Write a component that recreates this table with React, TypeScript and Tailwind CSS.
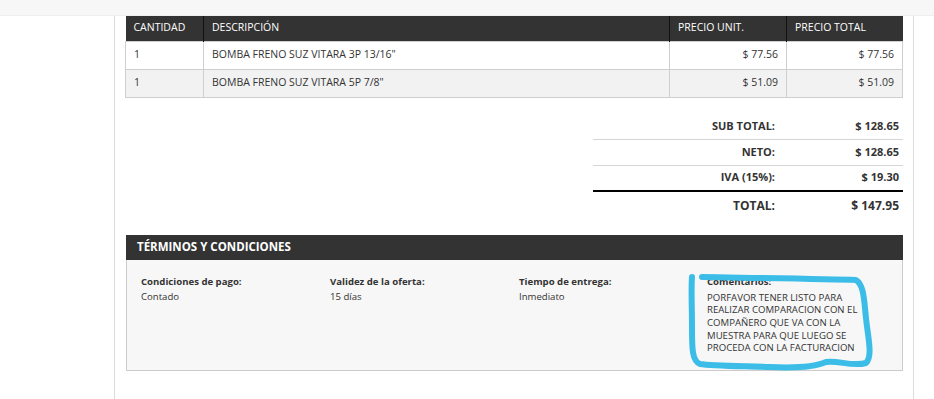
import React from "react";

type Item = { qty: number; desc: string; unit: string; total: string };

const items: Item[] = [
  { qty: 1, desc: "BOMBA FRENO SUZ VITARA 3P 13/16\"", unit: "$ 77.56", total: "$ 77.56" },
  { qty: 1, desc: "BOMBA FRENO SUZ VITARA 5P 7/8\"", unit: "$ 51.09", total: "$ 51.09" },
];

const totals = [
  { label: "SUB TOTAL:", value: "$ 128.65" },
  { label: "NETO:", value: "$ 128.65" },
  { label: "IVA (15%):", value: "$ 19.30" },
];

const terms = [
  { label: "Condiciones de pago:", value: "Contado" },
  { label: "Validez de la oferta:", value: "15 días" },
  { label: "Tiempo de entrega:", value: "Inmediato" },
];

const App = () => {
  return (
    <div className="relative min-h-screen bg-white font-['Open_Sans',sans-serif] text-[#333]">
      <div className="h-4 bg-[#f7f7f7] border-b border-[#efefef]" />
      <div className="ml-[114px] w-[800px] h-[383px] border-x border-[#dcdcdc] px-[10px]">
        {/* items */}
        <table className="w-full border-collapse text-[10.5px]">
          <thead>
            <tr className="bg-[#333] text-white text-left h-[25px]">
              <th className="w-[78px] px-2 font-normal border-r border-[#111]">CANTIDAD</th>
              <th className="px-2 font-normal border-r border-[#111]">DESCRIPCIÓN</th>
              <th className="w-[117px] px-2 font-normal border-r border-[#111]">PRECIO UNIT.</th>
              <th className="w-[116px] px-2 font-normal">PRECIO TOTAL</th>
            </tr>
          </thead>
          <tbody>
            {items.map((it, i) => (
              <tr key={i} className={`h-[28px] ${i % 2 ? "bg-[#f2f2f2]" : "bg-white"}`}>
                <td className="px-2 border border-[#cfcfcf]">{it.qty}</td>
                <td className="px-2 border border-[#cfcfcf]">{it.desc}</td>
                <td className="px-2 border border-[#cfcfcf] text-right">{it.unit}</td>
                <td className="px-2 border border-[#cfcfcf] text-right">{it.total}</td>
              </tr>
            ))}
          </tbody>
        </table>

        {/* totals */}
        <div className="flex justify-end mt-[16px]">
          <div className="w-[310px] text-[11px] font-bold">
            {totals.map((t, i) => (
              <div
                key={t.label}
                className={`flex h-[26px] items-center ${i === 2 ? "border-b-2 border-black" : "border-b border-[#d5d5d5]"}`}
              >
                <span className="w-[182px] text-right">{t.label}</span>
                <span className="flex-1 text-right pr-[4px]">{t.value}</span>
              </div>
            ))}
            <div className="flex h-[28px] items-center text-[12px]">
              <span className="w-[182px] text-right">TOTAL:</span>
              <span className="flex-1 text-right pr-[4px]">$ 147.95</span>
            </div>
          </div>
        </div>

        {/* terms */}
        <div className="mt-[15px] ml-px">
          <div className="bg-[#333] h-[25px] flex items-center px-[11px] text-white text-[11.5px] font-bold">
            TÉRMINOS Y CONDICIONES
          </div>
          <div className="h-[111px] bg-[#f7f7f7] border-x border-b border-[#cccccc] pl-[14px] pt-[15px] grid grid-cols-[189px_189px_188px_1fr] text-[9.6px]">
            {terms.map((t) => (
              <div key={t.label}>
                <div className="font-bold leading-[14px]">{t.label}</div>
                <div className="leading-[16px]">{t.value}</div>
              </div>
            ))}
            <div>
              <div className="font-bold leading-[14px]">Comentarios:</div>
              <div className="w-[170px] leading-[12.7px] mt-[3px]">
                PORFAVOR TENER LISTO PARA REALIZAR COMPARACION CON EL COMPAÑERO QUE VA CON LA MUESTRA PARA QUE LUEGO SE PROCEDA CON LA FACTURACION
              </div>
            </div>
          </div>
        </div>
      </div>

      {/* highlighter mark around the comment */}
      <svg className="absolute left-0 top-0 pointer-events-none" width="934" height="399" viewBox="0 0 934 399">
        <path
          d="M702 277 C760 278 830 279 856 280 C864 285 864 300 866 318 C868 338 873 356 866 363 C852 367 838 360 826 362 C812 368 790 368 770 367 C740 366 712 366 700 364 C692 361 692 348 692 328 C692 306 691 290 692 277"
          fill="none"
          stroke="#3cbde8"
          strokeWidth="6"
          strokeLinecap="round"
          strokeLinejoin="round"
        />
      </svg>
    </div>
  );
};

export default App;
